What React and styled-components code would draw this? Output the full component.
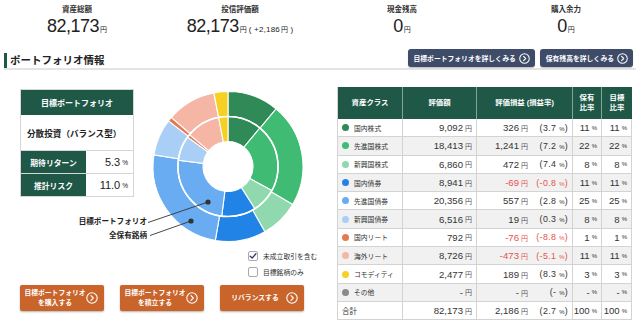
import React from "react";
import styled, { createGlobalStyle } from "styled-components";

const GREEN = "#1f5847";
const NAVY = "#3e4c69";
const ORANGE = "#c9642b";
const NEG = "#e5534b";

const GlobalStyle = createGlobalStyle`
  html, body { margin: 0; padding: 0; background: #fff; }
  body {
    font-family: "Liberation Sans", "Noto Sans CJK JP", sans-serif;
    color: #222;
    width: 640px;
    height: 335px;
    overflow: hidden;
  }
  * { box-sizing: border-box; }
`;

const Page = styled.div`
  width: 640px;
  height: 335px;
`;

/* ---------- top stats ---------- */
const Stats = styled.div`
  display: grid;
  grid-template-columns: repeat(4, 160px);
  padding-top: 5px;
`;
const Stat = styled.div`
  display: flex;
  flex-direction: column;
  align-items: center;
  transform: translateX(${(p) => p.$shift || 0}px);
`;
const StatLabel = styled.div`
  font-size: 7.5px;
  font-weight: 700;
  color: #333;
  line-height: 10px;
`;
const StatValue = styled.div`
  font-size: 18px;
  letter-spacing: -0.5px;
  line-height: 22px;
  color: #222;
  display: flex;
  align-items: baseline;
`;
const Unit = styled.span`
  font-size: ${(p) => p.$size || 7}px;
  letter-spacing: 0;
  margin-left: ${(p) => (p.$gap === undefined ? 1 : p.$gap)}px;
  color: ${(p) => p.$color || "inherit"};
`;
const SubValue = styled.span`
  font-size: 8px;
  margin-left: 2px;
  letter-spacing: 0.2px;
`;

/* ---------- section header ---------- */
const SectionHeader = styled.div`
  display: flex;
  align-items: flex-end;
  justify-content: space-between;
  margin: 8px 4px 0 4px;
  padding-bottom: 1px;
  border-bottom: 2px solid #e4e4e4;
`;
const Title = styled.h2`
  margin: 0;
  height: 15px;
  border-left: 3px solid ${GREEN};
  padding-left: 3px;
  font-size: 10.5px;
  line-height: 15px;
  font-weight: 700;
  color: #222;
  margin-bottom: -1px;
`;
const NavGroup = styled.div`
  display: flex;
  gap: 5px;
  margin-right: 3px;
`;
const NavButton = styled.button`
  height: 18px;
  border: none;
  border-radius: 3px;
  background: ${NAVY};
  color: #fff;
  font-family: inherit;
  font-size: 6.8px;
  font-weight: 700;
  padding: 0 5px 0 6px;
  display: flex;
  align-items: center;
  gap: 3px;
  box-shadow: 0 1px 1px rgba(0, 0, 0, 0.25);
`;

/* ---------- main ---------- */
const Main = styled.div`
  display: flex;
  padding-left: 20px;
  margin-top: 17px;
`;
const LeftCol = styled.div`
  width: 298px;
  display: flex;
  flex-direction: column;
`;
const TopRow = styled.div`
  display: flex;
  height: 160px;
`;

const Card = styled.div`
  width: 114px;
  margin-top: 2px;
  align-self: flex-start;
  border: 1px solid #d6d6d6;
  background: #fff;
`;
const CardHeader = styled.div`
  height: 25px;
  background: ${GREEN};
  color: #fff;
  font-size: 8px;
  font-weight: 700;
  display: flex;
  align-items: center;
  justify-content: center;
`;
const CardBody = styled.div`
  height: 35px;
  display: flex;
  align-items: center;
  padding-left: 6px;
  font-size: 8.6px;
  font-weight: 700;
  color: #222;
`;
const CardRow = styled.div`
  display: grid;
  grid-template-columns: 65px 1fr;
  height: 23px;
  border-top: 1px solid #d6d6d6;
`;
const CardLabel = styled.div`
  background: ${GREEN};
  color: #fff;
  font-size: 7.8px;
  font-weight: 700;
  display: flex;
  align-items: center;
  justify-content: center;
`;
const CardValue = styled.div`
  display: flex;
  align-items: center;
  justify-content: flex-end;
  padding-right: 5px;
  font-size: 11px;
  color: #222;
`;

const ChartWrap = styled.div`
  position: relative;
  width: 184px;
  height: 160px;
`;
const ChartSvg = styled.svg`
  display: block;
  overflow: visible;
`;
const LegendLabel = styled.span`
  position: absolute;
  right: ${(p) => p.$right}px;
  top: ${(p) => p.$top}px;
  font-size: 7.6px;
  font-weight: 700;
  line-height: 10px;
  color: #222;
  white-space: nowrap;
`;

const Options = styled.div`
  margin-left: 228px;
  margin-top: 4px;
  display: flex;
  flex-direction: column;
  gap: 6px;
`;
const Option = styled.label`
  display: flex;
  align-items: center;
  gap: 5px;
  font-size: 6.8px;
  color: #333;
  height: 10px;
`;
const Box = styled.span`
  width: 10px;
  height: 10px;
  border: 1px solid #a9a9a9;
  border-radius: 2px;
  background: #fff;
  display: flex;
  align-items: center;
  justify-content: center;
`;

const ActionRow = styled.div`
  display: flex;
  gap: 16px;
  margin-top: 8px;
`;
const ActionButton = styled.button`
  width: 84px;
  height: 26px;
  border: none;
  border-radius: 2px;
  background: ${ORANGE};
  color: #fff;
  font-family: inherit;
  font-size: 6.8px;
  font-weight: 700;
  line-height: 10px;
  display: flex;
  align-items: center;
  padding: 0 6px 0 4px;
  box-shadow: 0 1px 2px rgba(0, 0, 0, 0.3);
`;
const ActionText = styled.span`
  flex: 1;
  text-align: center;
`;

/* ---------- table ---------- */
const COLS = "65px 74px 96px 29px 30px";
const Table = styled.div`
  width: 295px;
  margin-left: 19px;
  border-left: 1px solid #d3d3d3;
`;
const HeadRow = styled.div`
  display: grid;
  grid-template-columns: ${COLS};
  height: 32px;
  background: ${GREEN};
`;
const HeadCell = styled.div`
  color: #fff;
  font-size: 7.4px;
  font-weight: 700;
  line-height: 10px;
  text-align: center;
  display: flex;
  align-items: center;
  justify-content: center;
  border-right: 1px solid rgba(255, 255, 255, 0.45);
  &:last-child { border-right: none; }
`;
const Row = styled.div`
  display: grid;
  grid-template-columns: ${COLS};
  height: 18.3px;
  background: ${(p) => (p.$alt ? "#f1f1f1" : "#fff")};
`;
const Cell = styled.div`
  border-right: 1px solid #d3d3d3;
  border-bottom: 1px solid #d3d3d3;
  display: flex;
  align-items: center;
  justify-content: ${(p) => (p.$left ? "flex-start" : "flex-end")};
  padding: ${(p) => (p.$left ? "0 0 0 4px" : "0 4px 0 0")};
  font-size: ${(p) => (p.$left ? 6.8 : 9.6)}px;
  color: ${(p) => (p.$neg ? NEG : "#333")};
  white-space: nowrap;
`;
const Dot = styled.span`
  width: 7px;
  height: 7px;
  border-radius: 50%;
  background: ${(p) => p.$color};
  margin-right: 5px;
  flex: none;
`;
const Amount = styled.span`
  flex: 1;
  text-align: right;
`;
const Rate = styled.span`
  width: 40px;
  text-align: right;
  font-size: 8.8px;
  letter-spacing: 0.4px;
`;
const TotalLabel = styled.span`
  font-size: 7.6px;
`;

/* ---------- icons ---------- */
const CircleArrow = ({ size = 11 }) => (
  <svg width={size} height={size} viewBox="0 0 12 12">
    <circle cx="6" cy="6" r="5.2" fill="none" stroke="#fff" strokeWidth="1.1" />
    <path d="M5 3.6 L7.3 6 L5 8.4" fill="none" stroke="#fff" strokeWidth="1.2" strokeLinecap="round" strokeLinejoin="round" />
  </svg>
);

const Check = () => (
  <svg width="8" height="8" viewBox="0 0 10 10">
    <path d="M1.5 5.2 L4 7.6 L8.6 2.2" fill="none" stroke="#2c3e66" strokeWidth="1.7" strokeLinecap="round" strokeLinejoin="round" />
  </svg>
);

/* ---------- data ---------- */
const COLORS = ["#2f8a58", "#3fbb74", "#90d8ad", "#2283e6", "#69acf1", "#a9cff6", "#e8794e", "#f6b6a6", "#f6d024"];
const rows = [
  { name: "国内株式", val: "9,092", pl: "326", rate: "3.7", own: "11", tgt: "11" },
  { name: "先進国株式", val: "18,413", pl: "1,241", rate: "7.2", own: "22", tgt: "22" },
  { name: "新興国株式", val: "6,860", pl: "472", rate: "7.4", own: "8", tgt: "8" },
  { name: "国内債券", val: "8,941", pl: "-69", rate: "-0.8", own: "11", tgt: "11", neg: true },
  { name: "先進国債券", val: "20,356", pl: "557", rate: "2.8", own: "25", tgt: "25" },
  { name: "新興国債券", val: "6,516", pl: "19", rate: "0.3", own: "8", tgt: "8" },
  { name: "国内リート", val: "792", pl: "-76", rate: "-8.8", own: "1", tgt: "1", neg: true },
  { name: "海外リート", val: "8,726", pl: "-473", rate: "-5.1", own: "11", tgt: "11", neg: true },
  { name: "コモディティ", val: "2,477", pl: "189", rate: "8.3", own: "3", tgt: "3" },
  { name: "その他", val: "-", pl: "-", rate: "-", own: "-", tgt: "-", color: "#8a8a8a" },
];
const HOLD = [9092, 18413, 6860, 8941, 20356, 6516, 792, 8726, 2477];
const TARGET = [11, 22, 8, 11, 25, 8, 1, 11, 3];

function arc(cx, cy, r0, r1, a0, a1) {
  const p = (r, a) => {
    const t = a * Math.PI * 2;
    return [cx + r * Math.sin(t), cy - r * Math.cos(t)];
  };
  const large = a1 - a0 > 0.5 ? 1 : 0;
  const [x1, y1] = p(r1, a0);
  const [x2, y2] = p(r1, a1);
  const [x3, y3] = p(r0, a1);
  const [x4, y4] = p(r0, a0);
  return `M${x1} ${y1} A${r1} ${r1} 0 ${large} 1 ${x2} ${y2} L${x3} ${y3} A${r0} ${r0} 0 ${large} 0 ${x4} ${y4} Z`;
}

function Ring({ values, r0, r1, cx, cy }) {
  const total = values.reduce((a, b) => a + b, 0);
  let acc = 0;
  return values.map((v, i) => {
    const a0 = acc / total;
    acc += v;
    const a1 = acc / total;
    return <path key={i} d={arc(cx, cy, r0, r1, a0, a1)} fill={COLORS[i]} stroke="#fff" strokeWidth="1.1" />;
  });
}

const Donut = () => {
  const cx = 94;
  const cy = 79.5;
  return (
    <ChartSvg width="184" height="160" viewBox="0 0 184 160">
      <Ring values={HOLD} r0={50} r1={75} cx={cx} cy={cy} />
      <Ring values={TARGET} r0={25} r1={50} cx={cx} cy={cy} />
      <circle cx={cx} cy={cy} r="50" fill="none" stroke="#fff" strokeWidth="1.6" />
      <line x1="14" y1="135.5" x2="74" y2="115" stroke="#333" strokeWidth="0.9" />
      <circle cx="74" cy="115" r="2.6" fill="#333" />
      <line x1="16" y1="148.5" x2="57" y2="134" stroke="#333" strokeWidth="0.9" />
      <circle cx="57" cy="134" r="2.6" fill="#333" />
    </ChartSvg>
  );
};

export default function App() {
  return (
    <Page>
      <GlobalStyle />
      <Stats>
        <Stat $shift={-3}>
          <StatLabel>資産総額</StatLabel>
          <StatValue>82,173<Unit>円</Unit></StatValue>
        </Stat>
        <Stat>
          <StatLabel>投信評価額</StatLabel>
          <StatValue>
            82,173<Unit>円</Unit>
            <SubValue>( +2,186<Unit $size={7}>円</Unit> )</SubValue>
          </StatValue>
        </Stat>
        <Stat $shift={2}>
          <StatLabel>現金残高</StatLabel>
          <StatValue>0<Unit>円</Unit></StatValue>
        </Stat>
        <Stat $shift={6}>
          <StatLabel>購入余力</StatLabel>
          <StatValue>0<Unit>円</Unit></StatValue>
        </Stat>
      </Stats>

      <SectionHeader>
        <Title>ポートフォリオ情報</Title>
        <NavGroup>
          <NavButton>目標ポートフォリオを詳しくみる<CircleArrow size={11} /></NavButton>
          <NavButton>保有残高を詳しくみる<CircleArrow size={11} /></NavButton>
        </NavGroup>
      </SectionHeader>

      <Main>
        <LeftCol>
          <TopRow>
            <Card>
              <CardHeader>目標ポートフォリオ</CardHeader>
              <CardBody>分散投資（バランス型）</CardBody>
              <CardRow>
                <CardLabel>期待リターン</CardLabel>
                <CardValue>5.3<Unit $size={6.5} $gap={2}>%</Unit></CardValue>
              </CardRow>
              <CardRow>
                <CardLabel>推計リスク</CardLabel>
                <CardValue>11.0<Unit $size={6.5} $gap={2}>%</Unit></CardValue>
              </CardRow>
            </Card>
            <ChartWrap>
              <Donut />
              <LegendLabel $right={171} $top={130}>目標ポートフォリオ</LegendLabel>
              <LegendLabel $right={171} $top={144}>全保有銘柄</LegendLabel>
            </ChartWrap>
          </TopRow>

          <Options>
            <Option><Box><Check /></Box>未成立取引を含む</Option>
            <Option><Box />目標銘柄のみ</Option>
          </Options>

          <ActionRow>
            <ActionButton>
              <ActionText>目標ポートフォリオ<br />を購入する</ActionText>
              <CircleArrow size={12} />
            </ActionButton>
            <ActionButton>
              <ActionText>目標ポートフォリオ<br />を積立する</ActionText>
              <CircleArrow size={12} />
            </ActionButton>
            <ActionButton>
              <ActionText>リバランスする</ActionText>
              <CircleArrow size={12} />
            </ActionButton>
          </ActionRow>
        </LeftCol>

        <Table>
          <HeadRow>
            <HeadCell>資産クラス</HeadCell>
            <HeadCell>評価額</HeadCell>
            <HeadCell>評価損益 (損益率)</HeadCell>
            <HeadCell>保有<br />比率</HeadCell>
            <HeadCell>目標<br />比率</HeadCell>
          </HeadRow>
          {rows.map((r, i) => (
            <Row key={r.name} $alt={i % 2 === 1}>
              <Cell $left><Dot $color={r.color || COLORS[i]} />{r.name}</Cell>
              <Cell>{r.val}<Unit $size={7} $gap={2} $color="#555">円</Unit></Cell>
              <Cell $neg={r.neg}>
                <Amount>{r.pl}<Unit $size={7} $gap={2} $color={r.neg ? NEG : "#555"}>円</Unit></Amount>
                <Rate>({r.rate}<Unit $size={6} $gap={3}>%</Unit>)</Rate>
              </Cell>
              <Cell>{r.own}<Unit $size={6} $gap={2}>%</Unit></Cell>
              <Cell>{r.tgt}<Unit $size={6} $gap={2}>%</Unit></Cell>
            </Row>
          ))}
          <Row>
            <Cell $left><TotalLabel>合計</TotalLabel></Cell>
            <Cell>82,173<Unit $size={7} $gap={2} $color="#555">円</Unit></Cell>
            <Cell>
              <Amount>2,186<Unit $size={7} $gap={2} $color="#555">円</Unit></Amount>
              <Rate>(2.7<Unit $size={6} $gap={3}>%</Unit>)</Rate>
            </Cell>
            <Cell>100<Unit $size={6} $gap={2}>%</Unit></Cell>
            <Cell>100<Unit $size={6} $gap={2}>%</Unit></Cell>
          </Row>
        </Table>
      </Main>
    </Page>
  );
}
